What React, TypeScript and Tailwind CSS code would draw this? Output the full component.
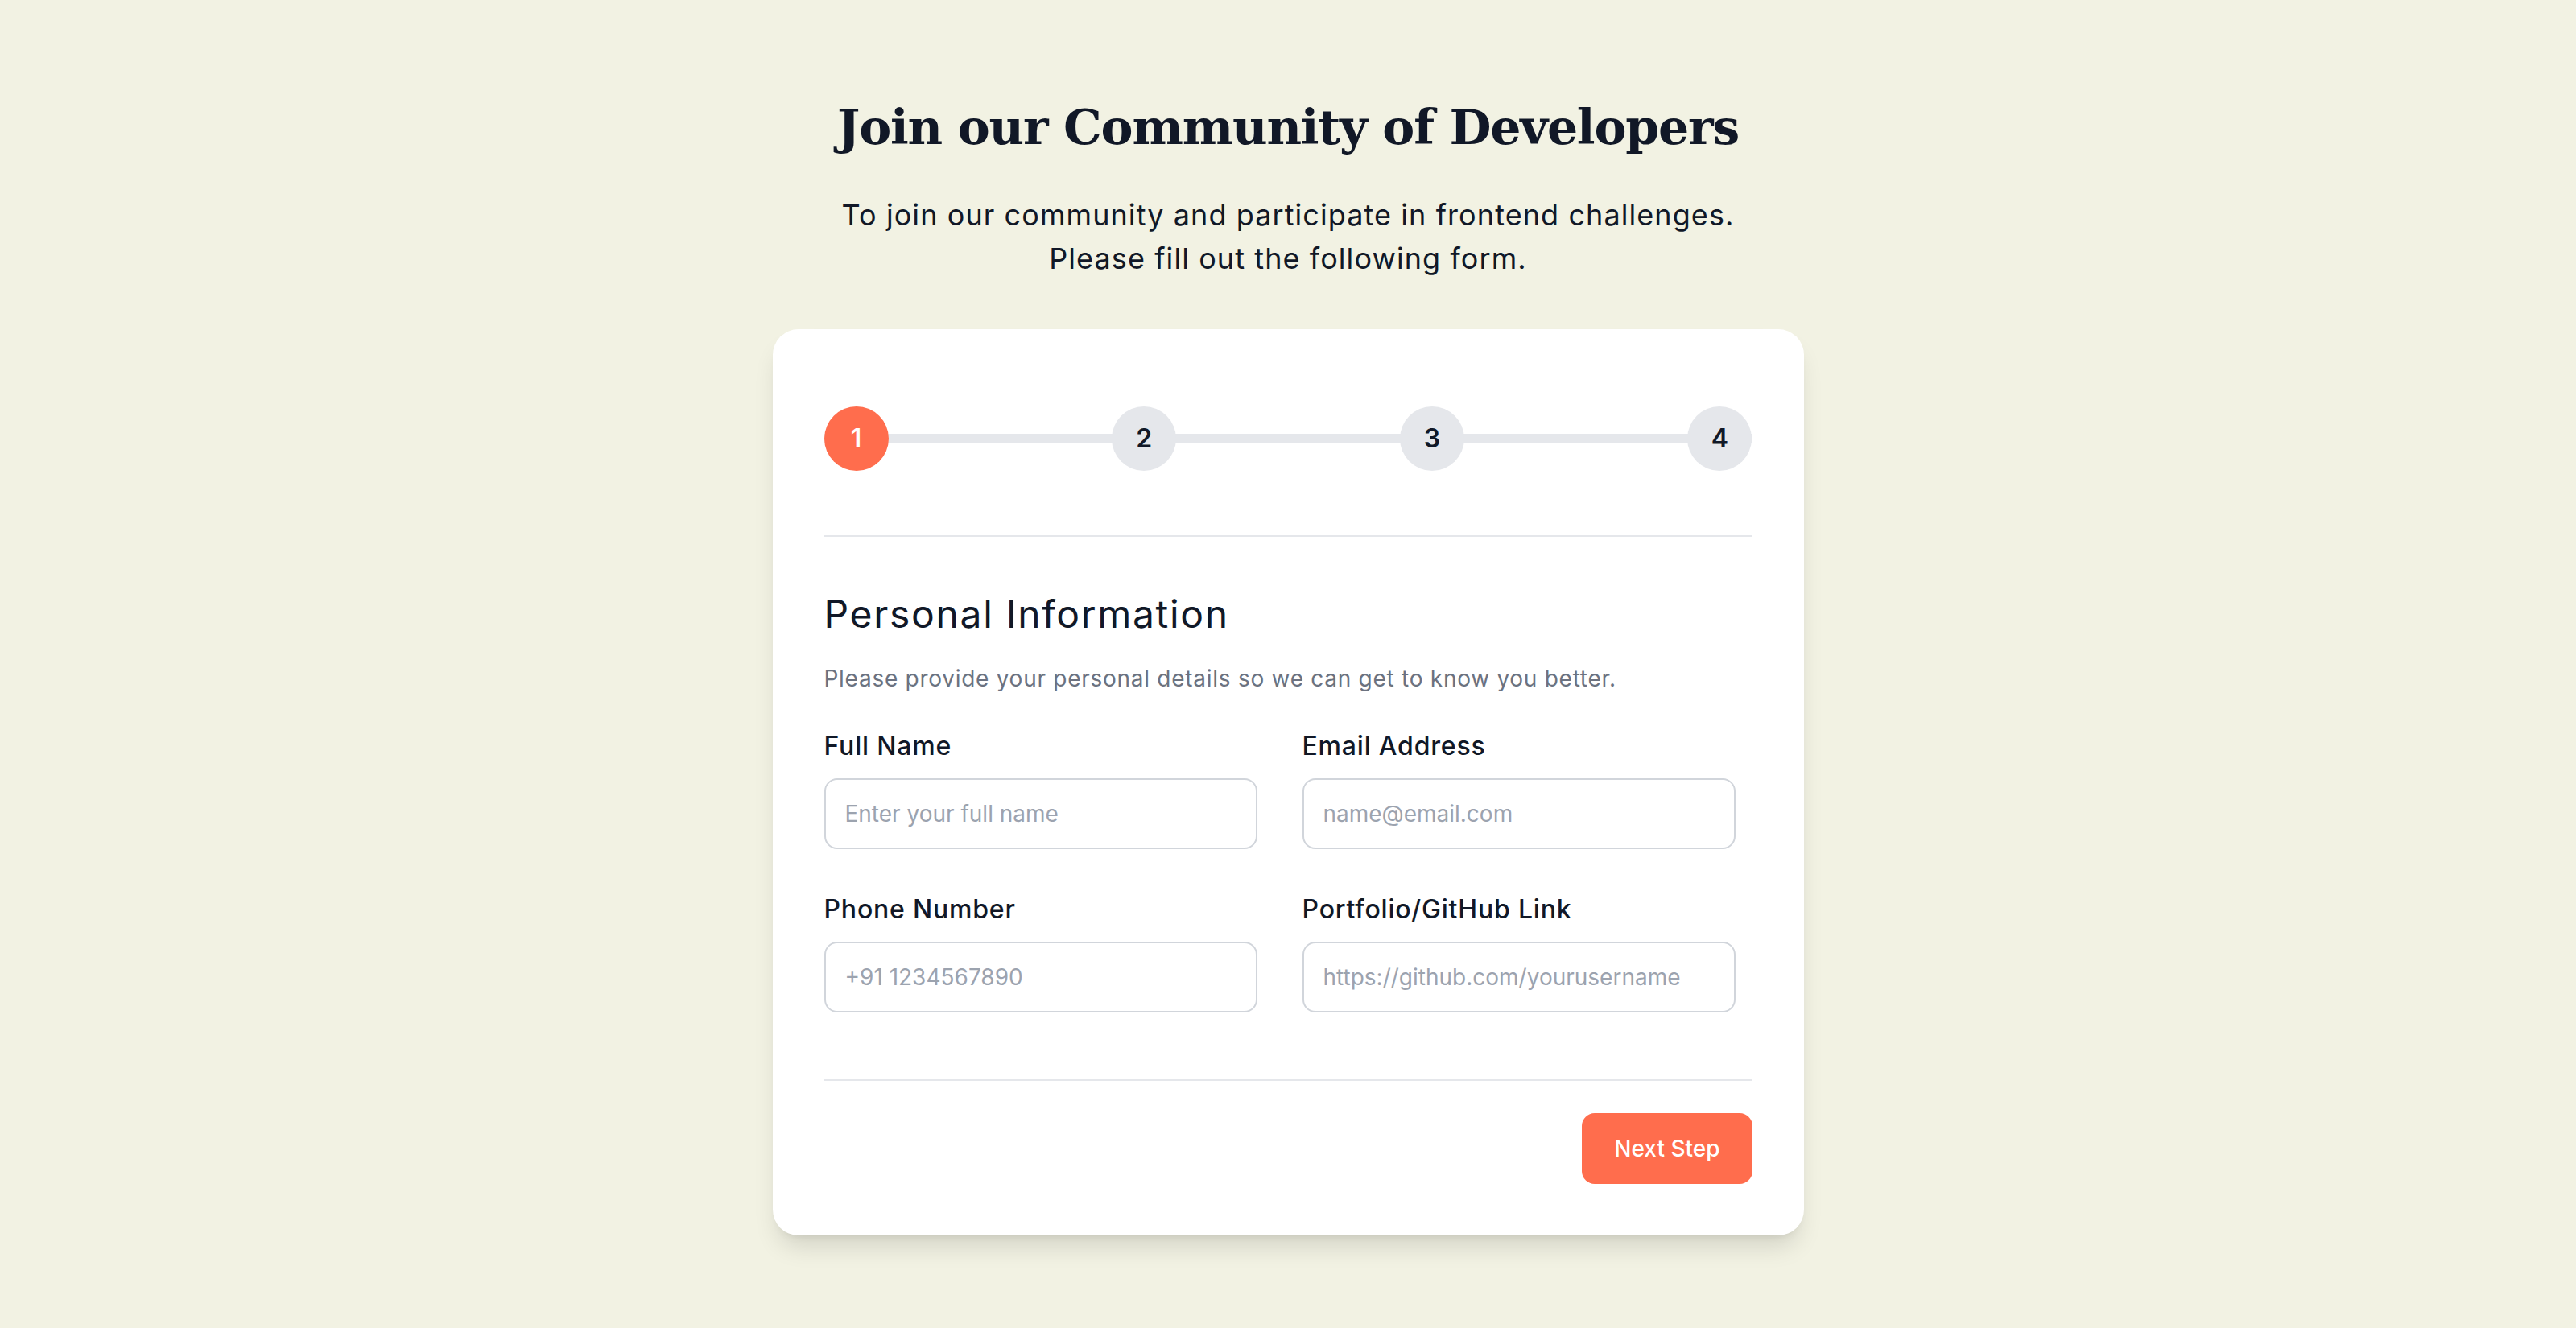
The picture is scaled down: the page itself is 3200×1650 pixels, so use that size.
import React from "react";

const sans = "font-['Inter','Open_Sans',sans-serif]";

function Field({ label, placeholder }: { label: string; placeholder: string }) {
  return (
    <div className="flex flex-col">
      <label className="text-[32px] leading-[48px] font-medium tracking-[0.025em] text-[#111827] mb-[16px]">{label}</label>
      <input
        type="text"
        placeholder={placeholder}
        className="h-[88px] w-full rounded-[16px] border-2 border-[#d1d5db] bg-white px-[24px] text-[28px] leading-[40px] text-[#111827] placeholder:text-[#9ca3af] outline-none"
      />
    </div>
  );
}

export default function App() {
  const steps = [1, 2, 3, 4];
  return (
    <div className={`min-h-screen w-full bg-[#f2f2e3] ${sans} flex flex-col items-center pt-[118px] pb-[100px]`}>
      <h1 className="font-['DejaVu_Serif',serif] font-bold text-[60px] leading-[80px] tracking-[-0.02em] text-[#111827] text-center">
        Join our Community of Developers
      </h1>
      <p className="mt-[42px] text-[36px] leading-[54px] tracking-[0.03em] text-[#111827] text-center">
        To join our community and participate in frontend challenges.
        <br />
        Please fill out the following form.
      </p>
      <div className="mt-[61px] w-[1281px] rounded-[32px] bg-white p-[64px] shadow-[0_20px_30px_-6px_rgba(0,0,0,0.12),0_8px_12px_-8px_rgba(0,0,0,0.1)]">
        <div className="pt-[32px] pb-[80px]">
          <div className="relative flex items-center justify-between">
            <div className="absolute left-0 right-0 top-1/2 h-[12px] -translate-y-1/2 bg-[#e5e7eb]" />
            {steps.map((s) => (
              <div
                key={s}
                className={`relative z-10 flex h-[80px] w-[80px] items-center justify-center rounded-full text-[32px] font-semibold ${
                  s === 1 ? "bg-[#ff6d4d] text-white" : "bg-[#e5e7eb] text-[#111827]"
                }`}
              >
                {s}
              </div>
            ))}
          </div>
        </div>
        <div className="h-[2px] bg-[#e5e7eb]" />
        <h2 className="mt-[64px] text-[48px] leading-[64px] font-normal tracking-[0.035em] text-[#111827]">Personal Information</h2>
        <p className="mt-[28px] text-[28px] leading-[40px] tracking-[0.026em] text-[#6b7280]">
          Please provide your personal details so we can get to know you better.
        </p>
        <div className="mt-[40px] grid w-[1132px] grid-cols-2 gap-x-[56px] gap-y-[51px]">
          <Field label="Full Name" placeholder="Enter your full name" />
          <Field label="Email Address" placeholder="name@email.com" />
          <Field label="Phone Number" placeholder="+91 1234567890" />
          <Field label="Portfolio/GitHub Link" placeholder="https://github.com/yourusername" />
        </div>
        <div className="mt-[83px] h-[2px] bg-[#e5e7eb]" />
        <div className="mt-[40px] flex justify-end">
          <button className="h-[88px] rounded-[16px] bg-[#ff6d4d] px-[40px] text-[28px] font-medium text-white">
            Next Step
          </button>
        </div>
      </div>
    </div>
  );
}
